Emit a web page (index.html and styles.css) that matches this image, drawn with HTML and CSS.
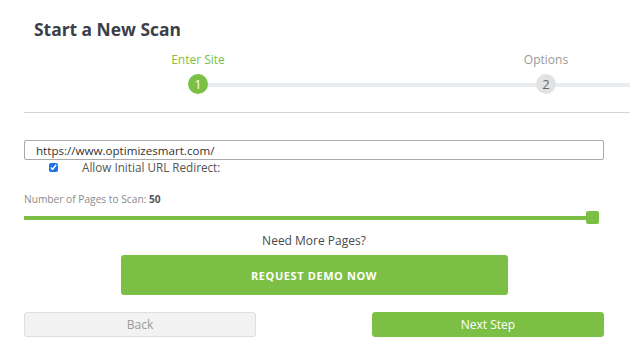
FILE: index.html
```html
<!DOCTYPE html>
<html lang="en">
<head>
<meta charset="utf-8">
<title>Start a New Scan</title>
<link rel="stylesheet" href="styles.css">
</head>
<body>
<div class="page">
  <h1 class="title">Start a New Scan</h1>
  <div class="stepper">
    <div class="step step-active step-first">
      <div class="step-label">Enter Site</div>
      <div class="step-dot">1</div>
    </div>
    <div class="step">
      <div class="step-label">Options</div>
      <div class="step-dot">2</div>
    </div>
  </div>
  <div class="divider"></div>
  <form class="form">
    <input class="url-input" type="text" value="https://www.optimizesmart.com/">
    <label class="check-row">
      <input class="check" type="checkbox" checked>
      <span class="check-label">Allow Initial URL Redirect:</span>
    </label>
    <div class="pages-label">Number of Pages to Scan: <b>50</b></div>
    <div class="slider">
      <div class="slider-track"></div>
      <div class="slider-thumb"></div>
    </div>
    <div class="more">Need More Pages?</div>
    <div class="demo-row">
      <button type="button" class="btn-demo">REQUEST DEMO NOW</button>
    </div>
    <div class="nav-row">
      <button type="button" class="btn btn-back">Back</button>
      <button type="button" class="btn btn-next">Next Step</button>
    </div>
  </form>
</div>
</body>
</html>
```

FILE: styles.css
```css
html, body {
  margin: 0;
  padding: 0;
  background: #ffffff;
  overflow: hidden;
}
body {
  font-family: "Open Sans", "DejaVu Sans", sans-serif;
  color: #444;
  width: 630px;
  height: 347px;
}
.page {
  padding: 0 26px 0 24px;
}
.title {
  margin: 18px 0 0 10px;
  font-size: 17.4px;
  line-height: 22px;
  font-weight: 700;
  color: #3c3e48;
}
.stepper {
  display: flex;
  margin: 7px -26px 0 0;
  padding: 6px 0 4px;
  overflow: hidden;
}
.step {
  position: relative;
  width: 348px;
  flex: none;
  display: flex;
  flex-direction: column;
  align-items: center;
}
.step::before {
  content: "";
  position: absolute;
  left: 0;
  right: 0;
  top: 30px;
  height: 4px;
  background: #e9edf0;
}
.step-first::before {
  left: 50%;
}
.step-label {
  font-size: 12px;
  line-height: 14px;
  color: #9a9a9a;
}
.step-active .step-label {
  color: #7cbf45;
}
.step-dot {
  position: relative;
  z-index: 1;
  margin-top: 7px;
  width: 20px;
  height: 20px;
  border-radius: 50%;
  background: #e2e2e2;
  color: #666;
  font-size: 13px;
  line-height: 20px;
  text-align: center;
}
.step-active .step-dot {
  background: #7cbf45;
  color: #fff;
}
.divider {
  margin: 14px -26px 0 0;
  height: 1px;
  background: #d4d4d4;
}
.form {
  margin: 27px 0 0;
}
.url-input {
  display: block;
  box-sizing: border-box;
  width: 100%;
  height: 20px;
  margin: 0;
  padding: 0 11px;
  border: 1px solid #a9a9a9;
  border-radius: 2px;
  font-family: inherit;
  font-size: 11.6px;
  color: #333;
  outline: none;
}
.check-row {
  display: flex;
  align-items: center;
  height: 14px;
}
.check {
  margin: 0 0 0 25px;
  width: 9px;
  height: 9px;
  accent-color: #1a73e8;
}
.check-label {
  margin-left: 24px;
  font-size: 11.7px;
  color: #555;
}
.pages-label {
  margin-top: 19px;
  font-size: 10.2px;
  line-height: 12px;
  color: #8a8a8a;
}
.pages-label b {
  color: #555;
}
.slider {
  position: relative;
  margin-top: 6px;
  height: 13px;
  width: 575px;
}
.slider-track {
  position: absolute;
  left: 0;
  right: 0;
  top: 5px;
  height: 4px;
  background: #7cbf45;
}
.slider-thumb {
  position: absolute;
  right: 0;
  top: 0;
  width: 13px;
  height: 13px;
  border-radius: 2px;
  background: #7cbf45;
}
.more {
  margin-top: 10px;
  text-align: center;
  font-size: 12px;
  line-height: 14px;
  color: #4a4a4a;
}
.demo-row {
  display: flex;
  justify-content: center;
  margin-top: 7px;
}
.btn-demo {
  width: 387px;
  height: 40px;
  border: none;
  border-radius: 3px;
  background: #7cbf45;
  color: #fff;
  font-family: inherit;
  font-weight: 700;
  font-size: 11px;
  letter-spacing: 0.6px;
}
.nav-row {
  display: flex;
  justify-content: space-between;
  margin-top: 17px;
}
.btn {
  width: 232px;
  height: 25px;
  border-radius: 3px;
  font-family: inherit;
  font-size: 12px;
}
.btn-back {
  background: #f2f2f2;
  border: 1px solid #dedede;
  color: #9a9a9a;
}
.btn-next {
  background: #7cbf45;
  border: 1px solid #7cbf45;
  color: #fff;
}
```
